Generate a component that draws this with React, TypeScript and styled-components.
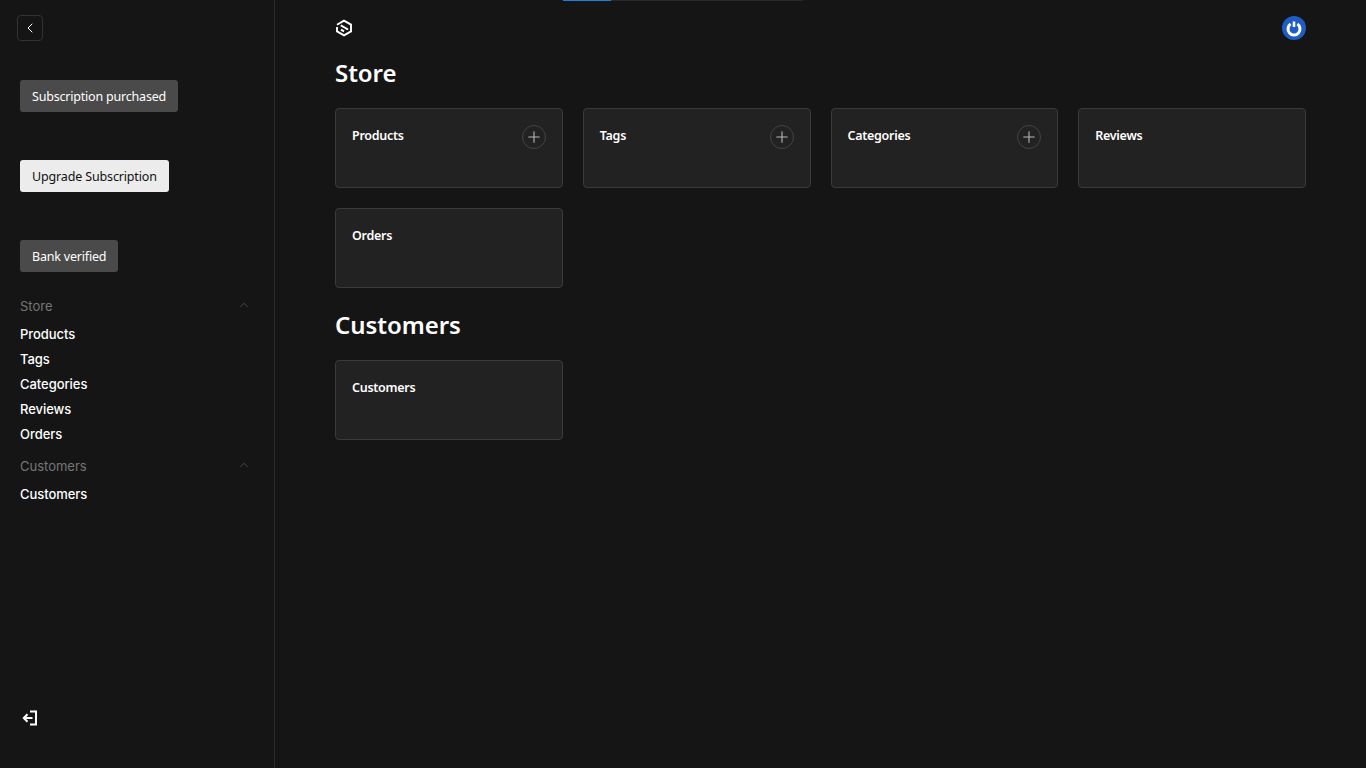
import React from "react";
import styled, { createGlobalStyle } from "styled-components";
import { ChevronLeft, ChevronUp, Plus } from "lucide-react";

const GlobalStyle = createGlobalStyle`
  html, body {
    margin: 0;
    padding: 0;
    background: #151515;
    height: 100%;
  }
  body {
    font-family: "Noto Sans", "Open Sans", sans-serif;
    color: #fff;
  }
`;

const sections = [
  {
    title: "Store",
    items: [
      { name: "Products", add: true },
      { name: "Tags", add: true },
      { name: "Categories", add: true },
      { name: "Reviews", add: false },
      { name: "Orders", add: false },
    ],
  },
  {
    title: "Customers",
    items: [{ name: "Customers", add: false }],
  },
];

const Logo = () => (
  <svg width="18" height="18" viewBox="0 0 18 18" fill="none" stroke="#fff" strokeWidth="1.9">
    <path d="M2 5.8 L9 1.6 L16 5.6 V12.4 L9 16.4 L2 12.4 V8" />
    <path d="M5.8 6.4 L12.2 10 V11" />
    <path d="M6 10.6 L9 12.4" />
  </svg>
);

const PowerBadge = () => (
  <svg width="24" height="24" viewBox="0 0 24 24" fill="none">
    <circle cx="12" cy="12" r="12" fill="#1f5cc4" />
    <path d="M8.6 8 A6 6 0 1 0 15.4 8" stroke="#fff" strokeWidth="3" />
    <path d="M12 5.5 V11" stroke="#fff" strokeWidth="2.6" />
  </svg>
);

const ExitIcon = () => (
  <svg width="18" height="18" viewBox="0 0 18 18" fill="none" stroke="#fff" strokeWidth="2">
    <path d="M9 2.5 H15 V15.5 H9" />
    <path d="M11.5 9 H3 M6.5 5.2 L2.8 9 L6.5 12.8" />
  </svg>
);

export default function App() {
  return (
    <Page>
      <GlobalStyle />
      <Progress>
        <ProgressFill />
      </Progress>
      <Sidebar>
        <BackButton>
          <ChevronLeft size={16} strokeWidth={1.5} />
        </BackButton>
        <StatusList>
          <StatusButton>Subscription purchased</StatusButton>
          <StatusButton $light>Upgrade Subscription</StatusButton>
          <StatusButton>Bank verified</StatusButton>
        </StatusList>
        <Nav>
          {sections.map((section) => (
            <NavGroup key={section.title}>
              <NavHeading>
                {section.title}
                <ChevronUp size={14} strokeWidth={1.25} color="#5a5a5a" />
              </NavHeading>
              {section.items.map((item) => (
                <NavLink key={item.name}>{item.name}</NavLink>
              ))}
            </NavGroup>
          ))}
        </Nav>
        <LogoutRow>
          <ExitIcon />
        </LogoutRow>
      </Sidebar>
      <Main>
        <TopBar>
          <Logo />
          <PowerBadge />
        </TopBar>
        {sections.map((section) => (
          <Section key={section.title}>
            <Heading>{section.title}</Heading>
            <CardGrid>
              {section.items.map((item) => (
                <Card key={item.name}>
                  <CardTitle>{item.name}</CardTitle>
                  {item.add && (
                    <AddButton>
                      <Plus size={18} strokeWidth={1.5} />
                    </AddButton>
                  )}
                </Card>
              ))}
            </CardGrid>
          </Section>
        ))}
      </Main>
    </Page>
  );
}

const Page = styled.div`
  display: flex;
  min-height: 768px;
  height: 100vh;
  overflow: hidden;
  background: #151515;
`;

const Progress = styled.div`
  position: absolute;
  top: 0;
  left: 563px;
  width: 240px;
  height: 1px;
  background: #2a2a2a;
`;

const ProgressFill = styled.div`
  width: 48px;
  height: 100%;
  background: #1a7fd8;
`;

const Sidebar = styled.aside`
  width: 275px;
  flex-shrink: 0;
  box-sizing: border-box;
  border-right: 1px solid #2c2c2c;
  padding: 15px 20px 0;
  display: flex;
  flex-direction: column;
`;

const BackButton = styled.div`
  width: 26px;
  height: 26px;
  margin-left: -3px;
  box-sizing: border-box;
  border: 1px solid #333;
  border-radius: 4px;
  display: flex;
  align-items: center;
  justify-content: center;
  color: #fff;
`;

const StatusList = styled.div`
  margin-top: 39px;
  display: flex;
  flex-direction: column;
  align-items: flex-start;
  gap: 48px;
`;

const StatusButton = styled.div<{ $light?: boolean }>`
  height: 32px;
  box-sizing: border-box;
  padding: 0 12px;
  border-radius: 3px;
  display: flex;
  align-items: center;
  font-size: 12.5px;
  letter-spacing: ${(p) => (p.$light ? "-0.15px" : "-0.2px")};
  background: ${(p) => (p.$light ? "#ececec" : "#4a4a4a")};
  color: ${(p) => (p.$light ? "#111" : "#fff")};
`;

const Nav = styled.nav`
  margin-top: 24px;
  display: flex;
  flex-direction: column;
  gap: 10px;
`;

const NavGroup = styled.div`
  display: flex;
  flex-direction: column;
`;

const NavHeading = styled.div`
  height: 20px;
  margin-bottom: 5px;
  padding-right: 3px;
  display: flex;
  align-items: center;
  justify-content: space-between;
  font-family: Inter, sans-serif;
  font-size: 13px;
  color: #757575;

  svg {
    margin-top: -3px;
  }
`;

const NavLink = styled.div`
  height: 25px;
  display: flex;
  align-items: center;
  font-family: Inter, sans-serif;
  font-size: 13px;
  font-weight: 500;
  letter-spacing: -0.05px;
  color: #fff;
`;

const LogoutRow = styled.div`
  margin-top: auto;
  height: 59px;
  color: #fff;
  display: flex;
  align-items: flex-start;
  padding-left: 1px;
`;

const Main = styled.main`
  flex: 1;
  padding: 16px 60px 0;
  min-width: 0;
`;

const TopBar = styled.div`
  height: 24px;
  display: flex;
  align-items: center;
  justify-content: space-between;
`;

const Section = styled.section`
  margin-top: 14px;

  & + & {
    margin-top: 18px;
  }
`;

const Heading = styled.h1`
  margin: 0;
  height: 38px;
  line-height: 38px;
  font-size: 24px;
  font-weight: 600;
  letter-spacing: -0.05px;
  color: #fff;
`;

const CardGrid = styled.div`
  margin-top: 16px;
  display: grid;
  grid-template-columns: repeat(4, 1fr);
  gap: 20px;
`;

const Card = styled.div`
  height: 80px;
  box-sizing: border-box;
  padding: 16px;
  background: #222;
  border: 1px solid #3a3a3a;
  border-radius: 4px;
  display: flex;
  align-items: flex-start;
  justify-content: space-between;
`;

const CardTitle = styled.div`
  font-size: 12.5px;
  font-weight: 600;
  line-height: 22px;
  letter-spacing: -0.28px;
  color: #fff;
`;

const AddButton = styled.div`
  width: 24px;
  height: 24px;
  box-sizing: border-box;
  border: 1px solid #444;
  border-radius: 50%;
  display: flex;
  align-items: center;
  justify-content: center;
  color: #b5b5b5;
`;
